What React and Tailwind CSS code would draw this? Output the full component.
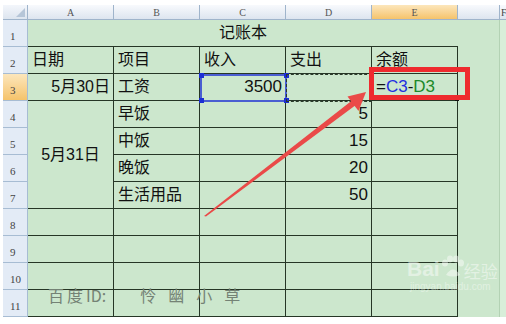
import React from 'react';

const font = { fontFamily: '"Liberation Sans", "Noto Sans CJK SC", sans-serif' };

const dark = 'border-[#263626]';
const green = 'bg-[#cce7cd]';

const ColHead = ({ label, active, className = '' }) => (
    <div
        className={`flex items-center justify-center border-r border-b border-[#9fb4cb] text-[10px] text-[#555] ${active
            ? 'bg-gradient-to-b from-[#fce6bb] to-[#f5c36a]'
            : 'bg-gradient-to-b from-[#f8fafd] to-[#dde5ef]'
            } ${className}`}
        style={{ fontFamily: '"Liberation Serif", serif' }}
    >
        {label}
    </div>
);

const RowHead = ({ n, active }) => (
    <div
        className={`flex items-end pb-[2px] pl-[7px] border-r border-b border-[#a7bcd3] text-[11px] text-[#444] ${active ? 'bg-gradient-to-b from-[#fce6bb] to-[#f5c36a]' : 'bg-[#e3ebf6]'
            }`}
        style={{ fontFamily: '"Liberation Serif", serif' }}
    >
        {n}
    </div>
);

// one bordered cell of the table
const Cell = ({ children, align = 'left', num, className = '' }) => (
    <div
        className={`flex items-center border-r border-b ${dark} ${green} px-[4px] text-[#111] ${align === 'right' ? 'justify-end pr-[3px]' : align === 'center' ? 'justify-center' : 'justify-start'
            } ${num ? 'text-[17px]' : 'text-[16px]'} ${className}`}
    >
        {children}
    </div>
);

const Tail = () => (
    <>
        <div className={`${green} border-r border-[#b3d2b4]`} />
        <div className="bg-[#d8eed9]" />
    </>
);

export default function App() {
    const empties = [8, 9, 10, 11];
    return (
        <div className="relative w-[506px] h-[324px] overflow-hidden bg-white" style={font}>
            <div className="pt-[5px] pl-[3px]">
                <div className="grid grid-cols-[25px_86px_86px_86px_86px_86px_42px_1fr] grid-rows-[15px_repeat(11,27px)]">
                    {/* column header */}
                    <div className="relative border-r border-b border-[#9fb4cb] bg-gradient-to-b from-[#f3f6fb] to-[#dde5ef]">
                        <svg className="absolute right-[2px] bottom-[2px]" width="9" height="9" viewBox="0 0 9 9">
                            <polygon points="9,0 9,9 0,9" fill="#b6c6d8" />
                        </svg>
                    </div>
                    <ColHead label="A" />
                    <ColHead label="B" />
                    <ColHead label="C" />
                    <ColHead label="D" />
                    <ColHead label="E" active />
                    <div className="border-r border-b border-[#9fb4cb] bg-gradient-to-b from-[#f8fafd] to-[#dde5ef]" />
                    <div className="border-b border-[#9fb4cb] bg-gradient-to-b from-[#f8fafd] to-[#dde5ef] text-[10px] text-[#444] pl-[1px] flex items-center" style={{ fontFamily: '"Liberation Serif", serif' }}>F</div>

                    {/* row 1 */}
                    <RowHead n="1" />
                    <div className={`col-span-5 flex items-center justify-center border-b ${dark} ${green} text-[16px] text-[#111]`}>记账本</div>
                    <Tail />

                    {/* row 2 */}
                    <RowHead n="2" />
                    <Cell>日期</Cell>
                    <Cell>项目</Cell>
                    <Cell>收入</Cell>
                    <Cell>支出</Cell>
                    <Cell>余额</Cell>
                    <Tail />

                    {/* row 3 */}
                    <RowHead n="3" active />
                    <Cell align="right">5月30日</Cell>
                    <Cell>工资</Cell>
                    <Cell align="right" num>3500</Cell>
                    <Cell />
                    <Cell num>
                        <span>=</span>
                        <span className="text-[#1f2fe0]">C3</span>
                        <span>-</span>
                        <span className="text-[#1d8a2a]">D3</span>
                    </Cell>
                    <Tail />

                    {/* rows 4-7 */}
                    <RowHead n="4" />
                    <Cell align="center" className="row-span-4">5月31日</Cell>
                    <Cell>早饭</Cell>
                    <Cell />
                    <Cell align="right" num>5</Cell>
                    <Cell />
                    <Tail />

                    <RowHead n="5" />
                    <Cell>中饭</Cell>
                    <Cell />
                    <Cell align="right" num>15</Cell>
                    <Cell />
                    <Tail />

                    <RowHead n="6" />
                    <Cell>晚饭</Cell>
                    <Cell />
                    <Cell align="right" num>20</Cell>
                    <Cell />
                    <Tail />

                    <RowHead n="7" />
                    <Cell>生活用品</Cell>
                    <Cell />
                    <Cell align="right" num>50</Cell>
                    <Cell />
                    <Tail />

                    {empties.map((n) => (
                        <React.Fragment key={n}>
                            <RowHead n={String(n)} />
                            <Cell />
                            <Cell />
                            <Cell />
                            <Cell />
                            <Cell />
                            <Tail />
                        </React.Fragment>
                    ))}
                </div>
            </div>

            {/* selection on C3 */}
            <div className="absolute left-[200px] top-[74px] w-[87px] h-[28px] border-2 border-[#4a5ed2]" />
            <div className="absolute left-[199px] top-[73px] w-[5px] h-[5px] bg-[#1c2fd4]" />
            <div className="absolute left-[284px] top-[73px] w-[5px] h-[5px] bg-[#1c2fd4]" />
            <div className="absolute left-[199px] top-[98px] w-[5px] h-[5px] bg-[#1c2fd4]" />
            <div className="absolute left-[284px] top-[98px] w-[5px] h-[5px] bg-[#1c2fd4]" />

            {/* copy marquee on D3 */}
            <div className="absolute left-[286px] top-[74px] w-[86px] h-[28px] border border-dashed border-[#2a3a2a]" />

            {/* fill handle */}
            <div className="absolute left-[455px] top-[97px] w-[4px] h-[4px] bg-[#111]" />

            {/* red highlight box */}
            <div className="absolute left-[369px] top-[67px] w-[101px] h-[33px] border-[5px] border-[#ee2b2e]" />

            {/* arrow */}
            <svg className="absolute left-0 top-0" width="506" height="324" viewBox="0 0 506 324">
                <polygon points="204,216 352,100.5 355.5,105.2 206,216.5" fill="#ea4a48" />
                <polygon points="366,92 347.5,96.5 358.5,111" fill="#ea4a48" />
            </svg>

            {/* watermark text */}
            <div
                className="absolute left-[48px] top-[287px] text-[16px] leading-none text-[#748275] whitespace-nowrap"
                style={{ fontFamily: '"Noto Sans CJK SC", sans-serif' }}
            >
                <span className="tracking-[3px]">百度</span>
                <span>ID:</span>
                <span className="ml-[34px] tracking-[12px]">怜幽小草</span>
            </div>

            {/* baidu jingyan mark */}
            <div className="absolute left-[407px] top-[255px] flex items-end text-white opacity-45">
                <span className="text-[21px] font-bold leading-none" style={{ fontFamily: '"Liberation Sans", sans-serif' }}>Bai</span>
                <svg width="26" height="24" viewBox="0 0 26 24" className="-mx-[1px]">
                    <ellipse cx="6" cy="8" rx="3" ry="3.6" fill="#fff" />
                    <ellipse cx="11" cy="4" rx="3" ry="3.4" fill="#fff" />
                    <ellipse cx="17" cy="4" rx="3" ry="3.4" fill="#fff" />
                    <ellipse cx="22" cy="8" rx="3" ry="3.6" fill="#fff" />
                    <path d="M7 20 Q14 9 21 20 Q14 23 7 20 Z" fill="#fff" />
                </svg>
                <span className="text-[17px] leading-none" style={{ fontFamily: '"Noto Sans CJK SC", sans-serif' }}>经验</span>
            </div>
            <div className="absolute left-[410px] top-[279px] text-[10px] text-white opacity-40" style={{ fontFamily: '"Liberation Sans", sans-serif' }}>
                jingyan.baidu.com
            </div>
        </div>
    );
}
